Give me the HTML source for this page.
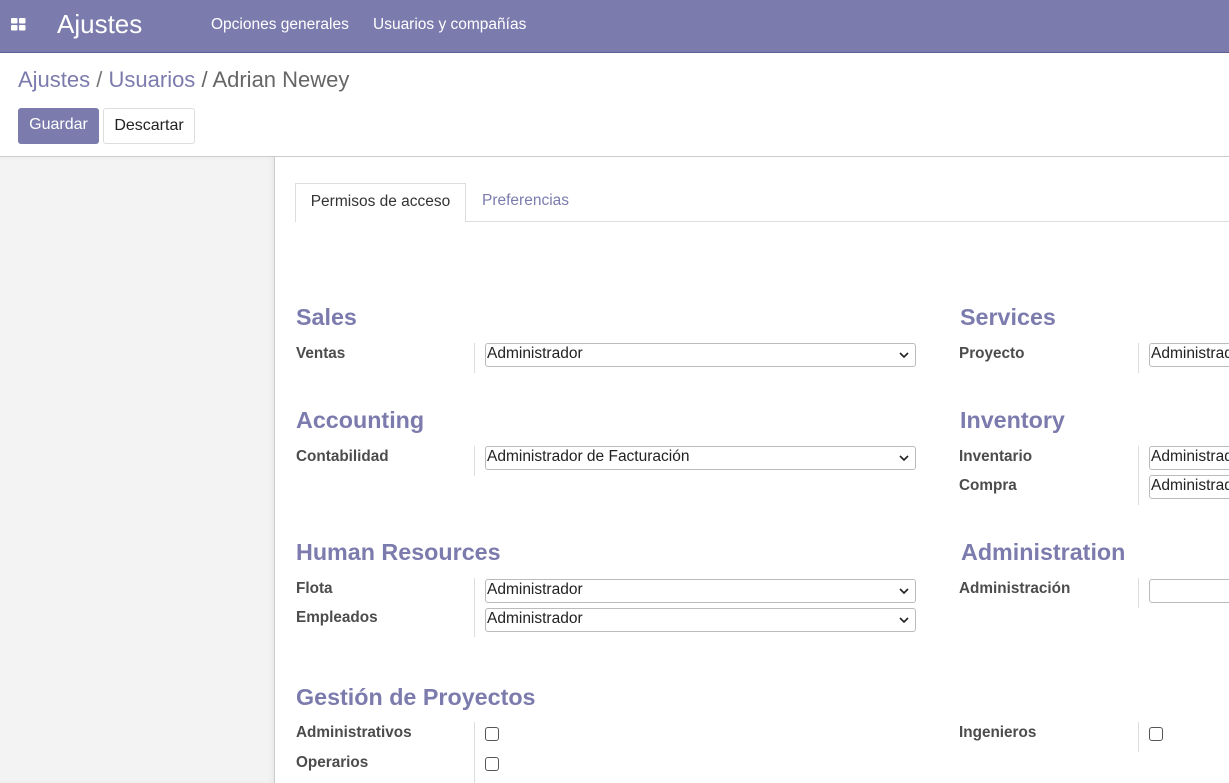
<!DOCTYPE html>
<html><head><meta charset="utf-8"><style>
*{box-sizing:border-box;margin:0;padding:0}
body{width:1229px;height:783px;overflow:hidden;font-family:"Liberation Sans",sans-serif;background:#fff;position:relative;color:#4c4c4c}
.a{position:absolute;white-space:nowrap}
.nav{left:0;top:0;width:1229px;height:53px;background:#7c7bad;border-bottom:1px solid #5f5e97}
.h{font-size:23.3px;font-weight:bold;color:#7c7bad}
.l{font-size:15.3px;font-weight:bold;color:#4c4c4c}
.sep{width:1px;background:#ddd}
.sel{height:24px;border:1px solid #bbb;border-radius:3px;font-size:15.5px;color:#222;padding:1px 0 0 1px;background:#fff}
.sel svg{position:absolute;right:6px;top:8px}
.cb{width:14px;height:14px;border:1.5px solid #555;border-radius:3px}
</style></head><body>
<div class="a nav"></div>
<svg class="a" style="left:11px;top:18px" width="15" height="13"><rect x="0" y="0" width="6.5" height="5.5" rx="1" fill="#fff"/><rect x="8" y="0" width="6.5" height="5.5" rx="1" fill="#fff"/><rect x="0" y="7" width="6.5" height="5.5" rx="1" fill="#fff"/><rect x="8" y="7" width="6.5" height="5.5" rx="1" fill="#fff"/></svg>
<div class="a" style="left:57px;top:9px;font-size:26px;color:#fff">Ajustes</div>
<div class="a" style="left:211px;top:16px;font-size:15.5px;color:#fff">Opciones generales</div>
<div class="a" style="left:373px;top:16px;font-size:15.5px;color:#fff">Usuarios y compañías</div>
<div class="a" style="left:18px;top:67px;font-size:22px;color:#7c7bad">Ajustes <span style="color:#777">/</span> Usuarios <span style="color:#666">/ Adrian Newey</span></div>
<div class="a" style="left:18px;top:108px;width:81px;height:36px;background:#7c7bad;border-radius:3px;color:#fff;font-size:16px;text-align:center;line-height:34px">Guardar</div>
<div class="a" style="left:103px;top:108px;width:92px;height:36px;border:1px solid #ddd;border-radius:3px;color:#222;font-size:16px;text-align:center;line-height:34px">Descartar</div>
<div class="a" style="left:0;top:156px;width:1229px;height:1px;background:#ccc"></div>
<div class="a" style="left:0;top:157px;width:275px;height:626px;background:#f3f3f3;border-right:1px solid #ccc;box-shadow:inset -3px 0 4px rgba(0,0,0,.04)"></div>
<div class="a" style="left:295px;top:221px;width:934px;height:1px;background:#ddd"></div>
<div class="a" style="left:295px;top:183px;width:171px;height:39px;border:1px solid #ddd;border-bottom:none;background:#fff;font-size:15.5px;color:#333;text-align:center;line-height:36px">Permisos de acceso</div>
<div class="a" style="left:482px;top:192px;font-size:15.5px;color:#7c7bad">Preferencias</div>

<div class="a h" style="left:296px;top:304px">Sales</div>
<div class="a l" style="left:296px;top:345px">Ventas</div>
<div class="a sep" style="left:474px;top:343px;height:30px"></div>
<div class="a sel" style="left:485px;top:343px;width:431px">Administrador<svg width="10" height="7"><path d="M1 1l4 4 4-4" stroke="#222" stroke-width="1.6" fill="none"/></svg></div>

<div class="a h" style="left:296px;top:407px">Accounting</div>
<div class="a l" style="left:296px;top:448px">Contabilidad</div>
<div class="a sep" style="left:474px;top:446px;height:30px"></div>
<div class="a sel" style="left:485px;top:446px;width:431px">Administrador de Facturación<svg width="10" height="7"><path d="M1 1l4 4 4-4" stroke="#222" stroke-width="1.6" fill="none"/></svg></div>

<div class="a h" style="left:296px;top:539px">Human Resources</div>
<div class="a l" style="left:296px;top:580px">Flota</div>
<div class="a l" style="left:296px;top:609px">Empleados</div>
<div class="a sep" style="left:474px;top:578px;height:59px"></div>
<div class="a sel" style="left:485px;top:579px;width:431px">Administrador<svg width="10" height="7"><path d="M1 1l4 4 4-4" stroke="#222" stroke-width="1.6" fill="none"/></svg></div>
<div class="a sel" style="left:485px;top:608px;width:431px">Administrador<svg width="10" height="7"><path d="M1 1l4 4 4-4" stroke="#222" stroke-width="1.6" fill="none"/></svg></div>

<div class="a h" style="left:296px;top:684px">Gestión de Proyectos</div>
<div class="a l" style="left:296px;top:724px">Administrativos</div>
<div class="a l" style="left:296px;top:754px">Operarios</div>
<div class="a sep" style="left:474px;top:722px;height:61px"></div>
<div class="a cb" style="left:485px;top:727px"></div>
<div class="a cb" style="left:485px;top:757px"></div>

<div class="a h" style="left:960px;top:304px">Services</div>
<div class="a l" style="left:959px;top:345px">Proyecto</div>
<div class="a sep" style="left:1138px;top:343px;height:30px"></div>
<div class="a sel" style="left:1149px;top:343px;width:100px">Administrador</div>

<div class="a h" style="left:960px;top:407px">Inventory</div>
<div class="a l" style="left:959px;top:448px">Inventario</div>
<div class="a l" style="left:959px;top:477px">Compra</div>
<div class="a sep" style="left:1138px;top:446px;height:59px"></div>
<div class="a sel" style="left:1149px;top:446px;width:100px">Administrador</div>
<div class="a sel" style="left:1149px;top:475px;width:100px">Administrador</div>

<div class="a h" style="left:961px;top:539px">Administration</div>
<div class="a l" style="left:959px;top:580px">Administración</div>
<div class="a sep" style="left:1138px;top:578px;height:30px"></div>
<div class="a sel" style="left:1149px;top:579px;width:100px"></div>

<div class="a l" style="left:959px;top:724px">Ingenieros</div>
<div class="a sep" style="left:1138px;top:722px;height:30px"></div>
<div class="a cb" style="left:1149px;top:727px"></div>
</body></html>
